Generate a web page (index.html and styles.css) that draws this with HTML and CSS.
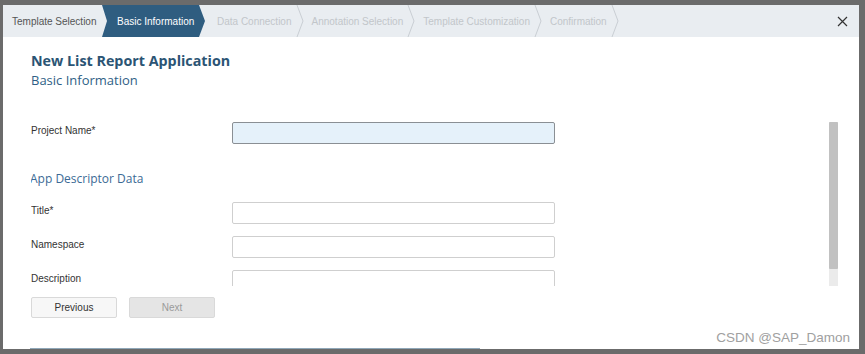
FILE: index.html
```html
<!DOCTYPE html>
<html lang="en">
<head>
  <meta charset="UTF-8" />
  <title>New List Report Application</title>
  <link rel="stylesheet" href="styles.css">
</head>
<body>
  <div class="dialog">
    <div class="steps">
      <div class="step done">Template Selection</div>
      <div class="step active">Basic Information</div>
      <div class="step">Data Connection</div>
      <span class="sep"><svg width="8" height="32" viewBox="0 0 8 32"><path d="M1 0 L7 16 L1 32" fill="none" stroke="#c9ced3" stroke-width="1"/></svg></span>
      <div class="step">Annotation Selection</div>
      <span class="sep"><svg width="8" height="32" viewBox="0 0 8 32"><path d="M1 0 L7 16 L1 32" fill="none" stroke="#c9ced3" stroke-width="1"/></svg></span>
      <div class="step">Template Customization</div>
      <span class="sep"><svg width="8" height="32" viewBox="0 0 8 32"><path d="M1 0 L7 16 L1 32" fill="none" stroke="#c9ced3" stroke-width="1"/></svg></span>
      <div class="step">Confirmation</div>
      <span class="sep"><svg width="8" height="32" viewBox="0 0 8 32"><path d="M1 0 L7 16 L1 32" fill="none" stroke="#c9ced3" stroke-width="1"/></svg></span>
      <button class="close" aria-label="Close">
        <svg width="11" height="11" viewBox="0 0 11 11"><path d="M1 1 L10 10 M10 1 L1 10" stroke="#333" stroke-width="1.2"/></svg>
      </button>
    </div>

    <div class="content">
      <h1>New List Report Application</h1>
      <h2>Basic Information</h2>

      <div class="scroll-area">
        <div class="form">
          <div class="row">
            <label>Project Name*</label>
            <input type="text" class="focused" />
          </div>

          <h3>App Descriptor Data</h3>

          <div class="row">
            <label>Title*</label>
            <input type="text" />
          </div>
          <div class="row">
            <label>Namespace</label>
            <input type="text" />
          </div>
          <div class="row">
            <label>Description</label>
            <input type="text" />
          </div>
        </div>
        <div class="scrollbar"><div class="thumb"></div></div>
      </div>

      <div class="actions">
        <button class="btn">Previous</button>
        <button class="btn disabled">Next</button>
      </div>
    </div>
    <div class="bottom-line"></div>
  </div>
  <div class="watermark">CSDN @SAP_Damon</div>
</body>
</html>
```

FILE: styles.css
```css
body {
  margin: 0;
  background: #6b6b6b;
  font-family: "Liberation Sans", Arial, sans-serif;
  height: 354px;
  overflow: hidden;
}

.dialog {
  position: relative;
  margin: 5px 6px 0 3px;
  height: 344px;
  background: #fff;
  display: flex;
  flex-direction: column;
}

/* wizard steps */
.steps {
  height: 32px;
  background: #e9edf1;
  display: flex;
  align-items: center;
  font-size: 10px;
  color: #c2c6ca;
}

.step {
  height: 32px;
  line-height: 33px;
  white-space: nowrap;
}

.step.done {
  color: #555;
  padding-left: 9px;
  width: 90px;
}

.step.active {
  background: #2f5d80;
  color: #fff;
  padding-left: 15px;
  width: 89px;
  clip-path: polygon(0 0, 97px 0, 103px 50%, 97px 100%, 0 100%, 5px 50%);
}

.step.active + .step {
  padding-left: 11px;
}

.sep {
  display: flex;
  margin: 0 8px 0 4px;
}

.close {
  margin-left: auto;
  margin-right: 11px;
  background: none;
  border: none;
  padding: 0;
  display: flex;
  cursor: pointer;
}

/* body */
.content {
  padding: 14px 0 0 28px;
  flex: 1;
}

h1 {
  margin: 0;
  font-family: "Open Sans", "Noto Sans", sans-serif;
  font-size: 14.3px;
  font-weight: 700;
  line-height: 20px;
  color: #2b5474;
}

h2 {
  margin: 0;
  font-family: "Open Sans", "Noto Sans", sans-serif;
  font-size: 13px;
  font-weight: 400;
  line-height: 18px;
  color: #2f5f86;
}

.scroll-area {
  margin-top: 33px;
  height: 164px;
  display: flex;
}

.form {
  flex: 1;
  overflow: hidden;
}

.row {
  display: flex;
  align-items: flex-start;
  margin-bottom: 12px;
}

.row label {
  width: 201px;
  font-size: 10px;
  color: #333;
  padding-top: 2px;
  line-height: 13px;
}

.row input {
  box-sizing: border-box;
  width: 323px;
  height: 22px;
  margin: 0;
  border: 1px solid #cfcfcf;
  border-radius: 2px;
  background: #fff;
}

.row input.focused {
  background: #e5f1fa;
  border-color: #8a8f94;
}

h3 {
  margin: 26px 0 14px -1px;
  font-family: "Open Sans", "Noto Sans", sans-serif;
  font-size: 12px;
  font-weight: 400;
  line-height: 18px;
  color: #3b6a95;
}

.scrollbar {
  width: 9px;
  margin-right: 21px;
  background: #ebebeb;
}

.thumb {
  height: 147px;
  background: #c1c1c1;
  border-radius: 1px;
}

.actions {
  display: flex;
  gap: 12px;
  margin-top: 11px;
}

.btn {
  width: 86px;
  height: 21px;
  font-family: "Liberation Sans", Arial, sans-serif;
  font-size: 10px;
  color: #333;
  background: #f7f7f7;
  border: 1px solid #d9d9d9;
  border-radius: 2px;
  padding: 0;
}

.btn.disabled {
  background: #e5e5e5;
  color: #9a9a9a;
}

.bottom-line {
  height: 1px;
  margin: 0 0 0 27px;
  width: 450px;
  background: #8fa7b8;
}

.watermark {
  position: absolute;
  right: 15px;
  top: 330px;
  font-size: 13.5px;
  color: #a0a0a0;
}
```
